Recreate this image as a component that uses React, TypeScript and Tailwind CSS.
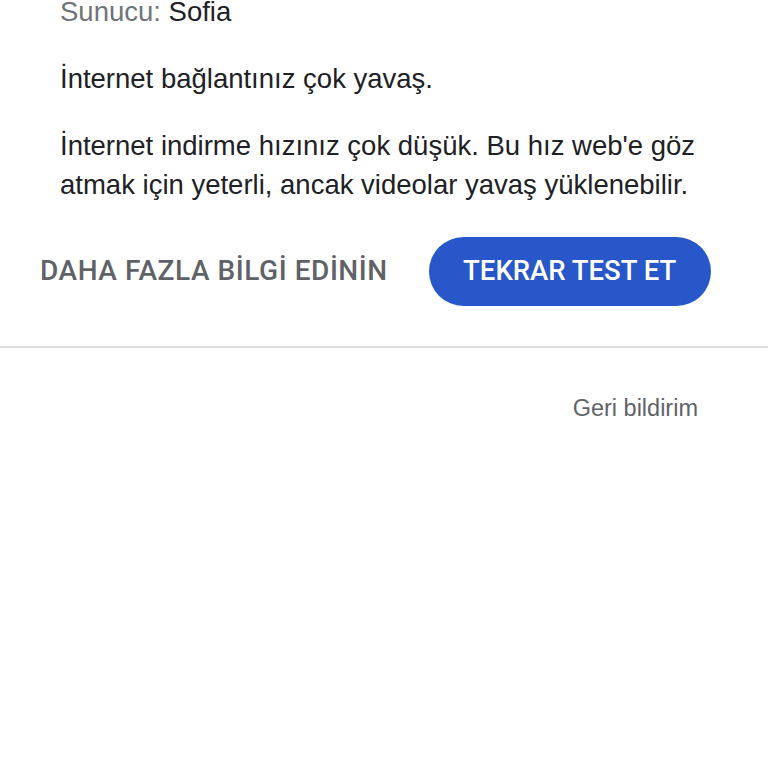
export default function App() {
  return (
    <div className="w-[768px] h-[768px] bg-white font-['Liberation_Sans',Arial,sans-serif] overflow-hidden">
      <div className="pl-[60px] pr-[60px]">
        <p className="text-[27.5px] leading-[24px] text-[#70757a]">
          Sunucu: <span className="text-[#202124]">Sofia</span>
        </p>
        <p className="mt-[38.5px] text-[27.5px] leading-[32px] text-[#202124]">İnternet bağlantınız çok yavaş.</p>
        <p className="mt-[31px] text-[27.5px] leading-[39px] text-[#202124]">
          İnternet indirme hızınız çok düşük. Bu hız web'e göz atmak için yeterli, ancak videolar yavaş yüklenebilir.
        </p>
      </div>
      <div className="flex items-center pl-[40px] mt-[33px]">
        <button className="text-[28px] font-medium text-[#5f6368] font-['Roboto',sans-serif] tracking-[0.55px]">
          DAHA FAZLA BİLGİ EDİNİN
        </button>
        <button className="ml-[41px] w-[282px] h-[69px] rounded-full bg-[#2857c9] text-white text-[27.5px] font-medium font-['Roboto',sans-serif]">
          TEKRAR TEST ET
        </button>
      </div>
      <div className="mt-[40px] h-[2px] bg-[#dcdcdc]" />
      <div className="flex justify-end pr-[70px] mt-[46px]">
        <span className="text-[23.5px] leading-[28px] text-[#5f6368]">Geri bildirim</span>
      </div>
    </div>
  );
}
